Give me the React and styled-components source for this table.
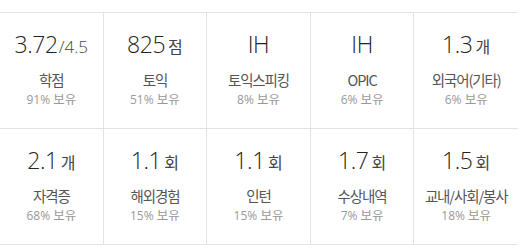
import styled, { createGlobalStyle } from 'styled-components';

const GlobalStyle = createGlobalStyle`
  html, body {
    margin: 0;
    padding: 0;
    background: #fff;
  }
  body {
    font-family: "Open Sans", "Noto Sans CJK KR", sans-serif;
  }
`;

const Wrapper = styled.div`
  padding-top: 12px;
  width: 518px;
`;

const StatGrid = styled.div`
  display: grid;
  grid-template-columns: repeat(5, 1fr);
  border-top: 1px solid #e3e3e3;
`;

const StatCell = styled.div`
  display: flex;
  flex-direction: column;
  align-items: center;
  height: 116px;
  padding-top: 14px;
  box-sizing: border-box;
  border-bottom: 1px solid #e3e3e3;
  border-right: ${(p) => (p.$last ? 'none' : '1px solid #e3e3e3')};
`;

const Value = styled.div`
  display: flex;
  align-items: baseline;
  height: 34px;
  line-height: 34px;
  color: #222;
  font-size: 23px;
  font-weight: 300;
  letter-spacing: -0.4px;
`;

const Unit = styled.span`
  margin-left: ${(p) => (p.$slash ? '1px' : '3px')};
  font-size: ${(p) => (p.$slash ? '17px' : '16px')};
  font-weight: ${(p) => (p.$slash ? 300 : 400)};
  letter-spacing: 0;
  color: #444;
  font-family: ${(p) => (p.$slash ? '"Open Sans", sans-serif' : '"Noto Sans CJK KR", sans-serif')};
`;

const Label = styled.div`
  margin-top: 9px;
  font-family: "Noto Sans CJK KR", sans-serif;
  font-size: 14.5px;
  line-height: 20px;
  letter-spacing: -1.1px;
  color: #555;
  white-space: nowrap;
`;

const Owned = styled.div`
  margin-top: 1px;
  font-size: 12px;
  line-height: 16px;
  color: #999;
  white-space: nowrap;

  span {
    font-family: "Noto Sans CJK KR", sans-serif;
    font-size: 12.5px;
  }
`;

const stats = [
  { value: '3.72', unit: '/4.5', slash: true, label: '학점', pct: 91 },
  { value: '825', unit: '점', label: '토익', pct: 51 },
  { value: 'IH', label: '토익스피킹', pct: 8 },
  { value: 'IH', label: 'OPIC', pct: 6 },
  { value: '1.3', unit: '개', label: '외국어(기타)', pct: 6 },
  { value: '2.1', unit: '개', label: '자격증', pct: 68 },
  { value: '1.1', unit: '회', label: '해외경험', pct: 15 },
  { value: '1.1', unit: '회', label: '인턴', pct: 15 },
  { value: '1.7', unit: '회', label: '수상내역', pct: 7 },
  { value: '1.5', unit: '회', label: '교내/사회/봉사', pct: 18 },
];

function App() {
  return (
    <Wrapper>
      <GlobalStyle />
      <StatGrid>
        {stats.map((s, i) => (
          <StatCell key={i} $last={i % 5 === 4}>
            <Value>
              {s.value}
              {s.unit && <Unit $slash={s.slash}>{s.unit}</Unit>}
            </Value>
            <Label>{s.label}</Label>
            <Owned>
              {s.pct}% <span>보유</span>
            </Owned>
          </StatCell>
        ))}
      </StatGrid>
    </Wrapper>
  );
}

export default App;
